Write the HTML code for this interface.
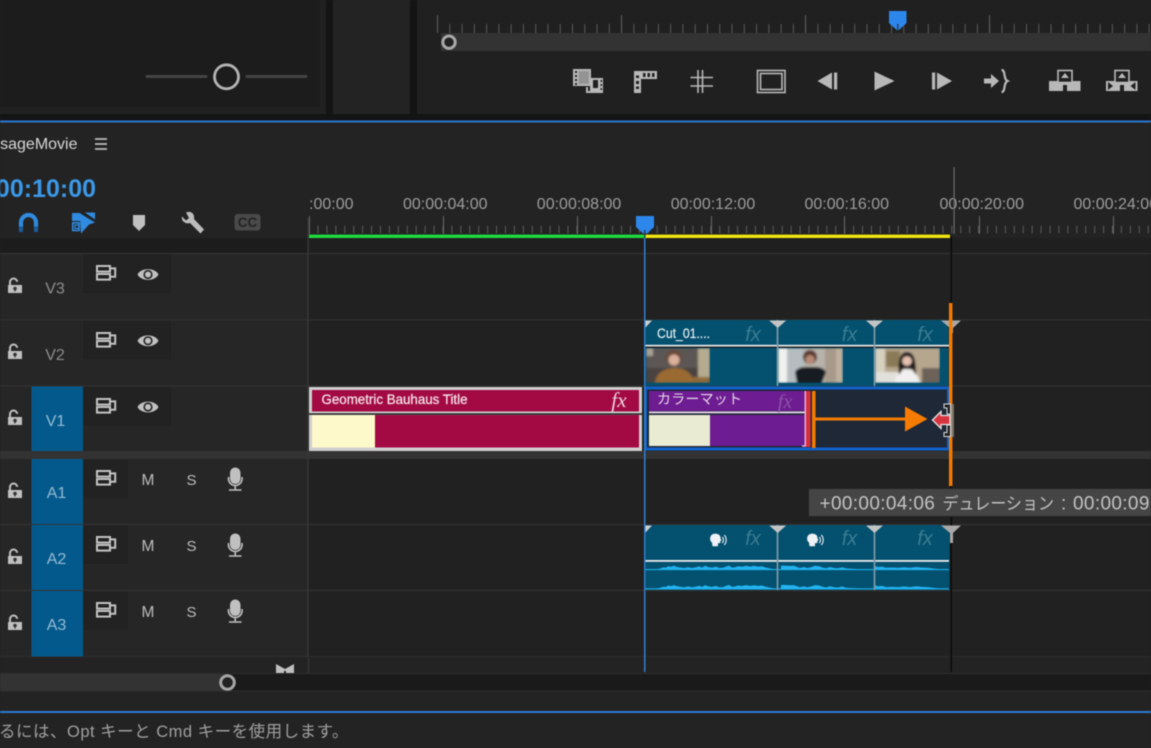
<!DOCTYPE html>
<html lang="ja">
<head>
<meta charset="utf-8">
<title>Timeline</title>
<style>
html,body{margin:0;padding:0;background:#222;width:1151px;height:748px;overflow:hidden}
svg.root{display:block;position:absolute;left:0;top:0;filter:blur(.4px)}
text{font-family:"Liberation Sans","Noto Sans CJK JP",sans-serif}
</style>
</head>
<body>
<svg class="root" width="1151" height="748" viewBox="0 0 1151 748" xmlns="http://www.w3.org/2000/svg">
<defs>
<filter id="b" x="-10%" y="-10%" width="120%" height="120%"><feGaussianBlur stdDeviation="1"/></filter>
<g id="lock">
  <path d="M10 7 V4.5 A3.6 3.6 0 0 1 17.2 3.8" fill="none" stroke="#c0c0c0" stroke-width="2"/>
  <path d="M8 7 H22 V15 H8 Z" fill="#c0c0c0"/>
  <circle cx="15" cy="10.5" r="1.8" fill="#333"/><rect x="14.4" y="10.5" width="1.2" height="3" fill="#333"/>
</g>
<g id="sync" fill="none" stroke="#c4c4c4" stroke-width="2">
  <rect x="97" y="1" width="13" height="5.6"/>
  <rect x="97" y="9" width="13" height="5.6"/>
  <path d="M110 3.4 H115.2 V11.8 H110"/>
</g>
<g id="eye">
  <path d="M137.5 0 C141 -7.2 155 -7.2 158.5 0 C155 7.2 141 7.2 137.5 0 Z" fill="#c0c0c0"/>
  <circle cx="148" cy="0" r="4.6" fill="#222"/>
  <circle cx="148" cy="0" r="3" fill="#c0c0c0"/>
</g>
<g id="mic">
  <rect x="230" y="0" width="10.5" height="16.5" rx="5.2" fill="#c0c0c0"/>
  <path d="M228.5 9.5 V12 A6.8 6.8 0 0 0 242 12 V9.5" fill="none" stroke="#c0c0c0" stroke-width="1.6"/>
  <path d="M235.2 18.5 V22 M229 22.5 H241.5" stroke="#c0c0c0" stroke-width="1.6"/>
</g>
<g id="ms">
  <text x="148" y="5.5" font-size="15.5" fill="#bdbdbd" text-anchor="middle">M</text>
  <text x="191.5" y="5.5" font-size="15" fill="#bdbdbd" text-anchor="middle">S</text>
</g>
<path id="wave" d="M645 570 V569.4 H655 L660 568.6 L663 567.4 L666 567.6 L668 566.2 L671 566.8 L674 565.8 L677 567 L680 567.4 L684 568 L688 567.2 L692 568 L696 567.3 L699 566.4 L702 567.6 L705 565.8 L708 567 L712 567.6 L716 566.6 L719 567.9 L723 567.8 L726 566.6 L729 565.6 L732 567.6 L735 567.2 L738 566.2 L742 566.7 L746 565.8 L750 566.6 L754 565.9 L758 566.6 L762 566.2 L766 567.6 L771 568.6 L776 569.4 V570 Z M781 570 V565.6 L786 565.7 L790 566 L794 565.8 L797 567 L800 568 L804 567 L807 568 L811 567.2 L815 565.8 L819 566.2 L823 567.6 L826 568.2 L830 567 L834 568 L838 568.2 L842 567.2 L846 568.4 L852 568.8 L860 569.2 L873 569.5 V570 Z M875 570 V566 L878 567 L882 566.6 L886 567.8 L892 567.5 L898 567.8 L904 567.2 L910 567.8 L916 567 L922 567.6 L928 567.8 L934 568.6 L940 569.3 L948 569.5 V570 Z" fill="#22b4f0"/>
<g id="spk">
  <path d="M0 -6.3 C4 -6.5 6.2 -4.5 6 -1.8 L7 0.5 L5.8 1 L5.8 3 L3.5 3.3 L3.5 6.2 L-2 6.2 L-2.5 2.5 C-5.5 0.5 -5 -6 0 -6.3 Z" fill="#eef2f4"/>
  <path d="M7.8 -3 A4.5 4.5 0 0 1 7.8 3 M9.8 -5 A7.5 7.5 0 0 1 9.8 5" fill="none" stroke="#eef2f4" stroke-width="1.1"/>
</g>
<path id="tri" d="M-8.5 0 H8.5 L0 7.5 Z" fill="#c4c4c4"/>
</defs>

<!-- base -->
<rect width="1151" height="748" fill="#232323"/>

<!-- top panels -->
<rect x="0" y="0" width="1151" height="121" fill="#141414"/>
<rect x="0" y="0" width="326" height="114" fill="#212121"/>
<rect x="0" y="0" width="320" height="107" fill="#1c1c1c"/>
<rect x="333" y="0" width="77" height="114" fill="#232323"/>
<rect x="417" y="0" width="734" height="114" fill="#202020"/>
<path d="M147 76.5 H206 M247 76.5 H306" stroke="#444" stroke-width="3" stroke-linecap="round"/>
<circle cx="226.5" cy="76.8" r="12" fill="none" stroke="#b4b4b4" stroke-width="2.8"/>

<!-- top ruler -->
<line x1="449.3" y1="28.5" x2="1151" y2="28.5" stroke="#5a5a5a" stroke-width="9" stroke-dasharray="1 11.27"/>
<path d="M437.5 15 V33 M621.5 15 V33 M805.5 15 V33 M989.5 15 V33" stroke="#606060" stroke-width="1"/>
<rect x="441" y="33" width="710" height="18" fill="#333"/>
<circle cx="449" cy="42.2" r="6.2" fill="#222" stroke="#a8a8a8" stroke-width="3"/>
<path d="M889 11 H906.5 V23 L897.8 31 L889 23 Z" fill="#2d86ea"/>
<path d="M897.8 24 V31" stroke="#202020" stroke-width="1"/>

<!-- transport icons -->
<g fill="#b8b8b8">
  <path d="M573 69 H591 V86 H573 Z"/>
  <path d="M575 71 H577 V73 H575 Z M575 75 H577 V77 H575 Z M575 79 H577 V81 H575 Z M575 83 H577 V85 H575 Z" fill="#202020"/>
  <rect x="578.5" y="71" width="10.5" height="13" fill="#949494"/>
  <path d="M590 78 H603 V93 H586 V87 H588 V91 H590 Z"/>
  <rect x="593" y="80" width="5" height="8" fill="#202020"/>
  <path d="M600.5 80 H602 V82 H600.5 Z M600.5 84 H602 V86 H600.5 Z M600.5 88 H602 V90 H600.5 Z M588 88 H589.5 V90 H588 Z" fill="#202020"/>
  <path d="M634 71 H657 V79 H641 V93 H634 Z"/>
  <path d="M643 73 H645.5 V77 H643 Z M647.5 73 H650 V77 H647.5 Z M652 73 H654.5 V77 H652 Z M636 75.5 H639 V78 H636 Z M636 81 H639 V84 H636 Z M636 86.5 H639 V89 H636 Z" fill="#202020"/>
  <path d="M817.5 81 L832 72.5 V89.5 Z"/><rect x="834" y="72.5" width="3.2" height="17"/>
  <path d="M874.5 71.5 L894.5 81 L874.5 90.5 Z"/>
  <rect x="932" y="72.5" width="3.2" height="17"/><path d="M937 72.5 L952 81 L937 89.5 Z"/>
  <path d="M984 78.5 H991 V74 L999 81 L991 88 V83.5 H984 Z"/>
  <path d="M1001.5 70 C1006 70 1003 79 1007.5 81 C1003 83 1006 92 1001.5 92" fill="none" stroke="#b8b8b8" stroke-width="2.2"/>
  <!-- lift -->
  <path d="M1049 91 V81 H1058 V83 H1072 V81 H1080.5 V91 H1067 V85 H1063 V91 Z"/>
  <rect x="1058" y="70.5" width="14" height="12" fill="#202020" stroke="#b8b8b8" stroke-width="1.6"/>
  <path d="M1065 73 L1069 78 H1061 Z"/>
  <!-- extract -->
  <path d="M1106 91 V81 H1115 V83 H1129 V81 H1137.5 V91 H1124 V85 H1120 V91 Z"/>
  <rect x="1115" y="70.5" width="14" height="12" fill="#202020" stroke="#b8b8b8" stroke-width="1.6"/>
  <path d="M1122 73 L1126 78 H1118 Z"/>
  <path d="M1108 82 L1113 86 L1108 90 Z M1135.5 82 L1130.5 86 L1135.5 90 Z" fill="#202020"/>
</g>
<g fill="none" stroke="#b8b8b8" stroke-width="1.6">
  <path d="M698 70 V93 M702.5 70 V93 M690.5 77.5 H713 M690.5 86 H713"/>
  <rect x="757.5" y="70.5" width="27.5" height="22"/>
  <rect x="760.5" y="73.5" width="21.5" height="16"/>
</g>

<!-- blue separator -->
<rect x="0" y="120.5" width="1151" height="2" fill="#2b7ad0"/>

<!-- timeline header -->
<text x="77.5" y="149" font-size="16" fill="#d8d8d8" text-anchor="end">UsageMovie</text>
<path d="M95 139 H107 M95 144 H107 M95 149 H107" stroke="#bcbcbc" stroke-width="1.7"/>
<text x="96" y="197" font-size="25" font-weight="bold" fill="#3b98e6" text-anchor="end">00:10:00</text>

<!-- toolbar icons -->
<path d="M21 227 V222.5 A7.5 7.5 0 0 1 36 222.5 V227" fill="none" stroke="#2f8be0" stroke-width="4.2"/>
<path d="M19 226.5 H23 V232 H19 Z M34 226.5 H38 V232 H34 Z" fill="#1c5c9d"/>
<path d="M72 213 H80 V221 H72 Z" fill="#2f8be0"/>
<path d="M72.8 222.8 H79 V230.5 H72.8 Z" fill="none" stroke="#2f8be0" stroke-width="1.6"/>
<path d="M75 225 H79 V228.5 H75 Z" fill="none" stroke="#2f8be0" stroke-width="1.2"/>
<path d="M79.5 213 L95 222.5 L89 224.5 L81 233.5 Z" fill="#2f8be0"/>
<path d="M85 212.5 H95 V219.5 Z" fill="#2f8be0"/>
<path d="M133 215 H145 V225 L139 231 L133 225 Z" fill="#c0c0c0"/>
<path d="M182 216.5 L186 220.5 L189 218 L186 212.5 C191 210.5 195 214 194 219 L204 229.5 L200.5 233.5 L190 223 C185.5 224.5 181 221 182 216.5 Z" fill="#bcbcbc"/>
<rect x="234.5" y="214" width="26" height="16.5" rx="3" fill="#4a4a4a"/>
<text x="247.5" y="227" font-size="13.5" font-weight="bold" fill="#232323" text-anchor="middle">CC</text>

<!-- ruler labels -->
<g font-size="16" fill="#9d9d9d">
  <text x="309" y="209">:00:00</text>
  <text x="403" y="209">00:00:04:00</text>
  <text x="536.8" y="209">00:00:08:00</text>
  <text x="670.7" y="209">00:00:12:00</text>
  <text x="804.5" y="209">00:00:16:00</text>
  <text x="939.5" y="209">00:00:20:00</text>
  <text x="1073.5" y="209">00:00:24:00</text>
</g>
<line x1="317.5" y1="229.5" x2="1151" y2="229.5" stroke="#5c5c5c" stroke-width="7.5" stroke-dasharray="1 7.927"/>
<path d="M309.5 216 V234 M443.5 216 V234 M577.5 216 V234 M711.5 216 V234 M844.5 216 V234 M979.5 216 V234 M1113.5 216 V234" stroke="#6a6a6a" stroke-width="1"/>

<!-- dark band and tracks area -->
<rect x="0" y="238" width="308" height="15" fill="#1c1c1c"/>
<rect x="309" y="238" width="842" height="15" fill="#1f1f1f"/>
<rect x="309" y="254" width="842" height="403" fill="#212121"/>
<rect x="0" y="254" width="308" height="403" fill="#262626"/>
<rect x="0" y="451" width="1151" height="8" fill="#333"/>
<g stroke="#333" stroke-width="1.2">
  <path d="M0 253.5 H1151 M0 319.8 H1151 M0 386 H1151 M0 524.5 H1151 M0 590.5 H1151 M0 656.8 H1151"/>
  <path d="M308 218 V672" stroke="#3a3a3a"/>
</g>

<!-- track targets -->
<g fill="#04598c">
  <rect x="31.5" y="386.5" width="51.5" height="64.5"/>
  <rect x="31.5" y="459" width="51.5" height="65"/>
  <rect x="31.5" y="525" width="51.5" height="65"/>
  <rect x="31.5" y="591" width="51.5" height="65.5"/>
</g>
<g fill="#222">
  <rect x="83" y="254" width="88" height="39"/>
  <rect x="83" y="320.5" width="88" height="39"/>
  <rect x="83" y="386.5" width="88" height="39"/>
  <rect x="83" y="459" width="45" height="39"/>
  <rect x="83" y="525" width="45" height="39"/>
  <rect x="83" y="591" width="45" height="39"/>
</g>

<!-- track icons -->
<use href="#lock" y="278"/><use href="#lock" y="344"/><use href="#lock" y="410"/>
<use href="#lock" y="483"/><use href="#lock" y="549"/><use href="#lock" y="615"/>
<use href="#sync" y="265"/><use href="#sync" y="332"/><use href="#sync" y="398"/>
<use href="#sync" y="470"/><use href="#sync" y="536"/><use href="#sync" y="602"/>
<use href="#eye" y="274.5"/><use href="#eye" y="340.8"/><use href="#eye" y="407"/>
<use href="#ms" y="479.5"/><use href="#ms" y="545.5"/><use href="#ms" y="611.5"/>
<use href="#mic" y="467.5"/><use href="#mic" y="533.5"/><use href="#mic" y="599.5"/>

<g font-size="16" text-anchor="middle">
  <text x="55" y="293.5" fill="#8d8d8d">V3</text>
  <text x="55" y="360" fill="#8d8d8d">V2</text>
  <text x="55.5" y="426" fill="#94bcd4">V1</text>
  <text x="56.5" y="498" fill="#94bcd4">A1</text>
  <text x="56.5" y="564" fill="#94bcd4">A2</text>
  <text x="56.5" y="630" fill="#94bcd4">A3</text>
</g>

<!-- title clip -->
<rect x="309" y="387" width="333" height="64" fill="#cfcfcf"/>
<rect x="312" y="390" width="327" height="21.5" fill="#a30a43"/>
<rect x="309" y="413.3" width="333" height="1.5" fill="#1b1b1b"/>
<rect x="312" y="415" width="327" height="32.5" fill="#a30a43"/>
<rect x="312" y="415" width="63" height="32.5" fill="#fdf9cb"/>
<text x="321.5" y="404" font-size="14" fill="#f4e4ea" stroke="#f4e4ea" stroke-width=".25" textLength="146" lengthAdjust="spacingAndGlyphs">Geometric Bauhaus Title</text>
<text x="619" y="407" font-size="21" font-style="italic" fill="#ecd5de" text-anchor="middle" style="font-family:'Liberation Serif',serif">fx</text>

<!-- V2 clips -->
<path d="M645 320 H942 Q948 320 948.5 326 V386 H645 Z" fill="#03506f"/>
<rect x="645" y="344.8" width="304" height="1.8" fill="#e6e6e6"/>
<rect x="645" y="346.6" width="304" height="1.3" fill="#1a1a1a"/>
<text x="657" y="338" font-size="14" fill="#e6ecef" stroke="#e6ecef" stroke-width=".2" textLength="53" lengthAdjust="spacingAndGlyphs">Cut_01....</text>
<g font-size="20" font-style="italic" fill="#3c7d92" text-anchor="middle" style="font-family:'Liberation Serif',serif">
  <text x="753" y="341">fx</text><text x="849.5" y="341">fx</text><text x="925" y="341">fx</text>
</g>
<!-- thumb 1 -->
<svg x="646" y="348" width="64" height="35" viewBox="0 0 64 35">
  <g filter="url(#b)">
    <rect width="64" height="35" fill="#5c5655"/>
    <rect x="0" y="20" width="64" height="15" fill="#4a4240"/>
    <rect x="52" y="0" width="12" height="35" fill="#b5ab90"/>
    <path d="M9 35 C10 24 20 20 29 20 C38 20 46 24 48 35 Z" fill="#9a6a33"/>
    <rect x="46" y="29" width="18" height="6" fill="#8f6a3a"/>
    <circle cx="28" cy="10" r="8" fill="#6a4a38"/>
    <circle cx="28" cy="12" r="5.5" fill="#d8b09c"/>
    <rect x="0" y="0" width="7" height="8" fill="#a8a093"/>
  </g>
</svg>
<!-- thumb 2 -->
<svg x="778" y="348" width="65" height="35" viewBox="0 0 65 35">
  <g filter="url(#b)">
    <rect width="65" height="35" fill="#b7b3ab"/>
    <rect x="0" y="0" width="9" height="35" fill="#f1f1ee"/>
    <rect x="9" y="0" width="17" height="35" fill="#b5bdc0"/>
    <rect x="47" y="0" width="18" height="35" fill="#a89a8a"/>
    <rect x="58" y="0" width="7" height="35" fill="#bdb09c"/>
    <path d="M19 35 L17 24 C20 18 28 19 32 19 C37 19 45 18 48 24 L44 35 Z" fill="#191c22"/>
    <circle cx="32" cy="9" r="7" fill="#5a3a30"/>
    <circle cx="32" cy="11.5" r="4.5" fill="#b88a76"/>
  </g>
</svg>
<!-- thumb 3 -->
<svg x="875" y="348" width="65" height="35" viewBox="0 0 65 35">
  <g filter="url(#b)">
    <rect width="65" height="35" fill="#b6a68e"/>
    <rect x="0" y="0" width="10" height="24" fill="#d6d0bf"/>
    <rect x="11" y="3" width="14" height="16" fill="#8a7a58"/>
    <rect x="0" y="24" width="24" height="11" fill="#e2e0da"/>
    <rect x="47" y="20" width="18" height="15" fill="#6c6258"/>
    <path d="M20 35 C20 25 26 21 31 21 C38 21 43 25 45 35 Z" fill="#f2f0ee"/>
    <path d="M24 27 C23 14 24 4 32 4 C40 4 41 14 41 27 L37 21 H28 Z" fill="#1b1518"/>
    <circle cx="32" cy="13" r="4.8" fill="#e4c0ae"/>
  </g>
</svg>
<path d="M777.5 320 V386 M874.5 320 V386" stroke="#7f9aa6" stroke-width="1.7"/>
<use href="#tri" x="777.7" y="320.5"/><use href="#tri" x="874.5" y="320.5"/>
<path d="M645 320.5 H652 L645.5 327.5 Z" fill="#cfcfcf"/>

<!-- V1 selected clip -->
<rect x="648" y="390" width="300" height="58" fill="#1f2837"/>
<rect x="649" y="391" width="156" height="20" fill="#6e1c91"/>
<rect x="649" y="411.5" width="156" height="1.8" fill="#e6d8ea"/>
<rect x="649" y="415" width="156" height="31" fill="#6e1c91"/>
<rect x="649" y="415" width="61" height="31" fill="#e9ecd2"/>
<rect x="804.5" y="391" width="1.6" height="55" fill="#e8b0d8"/>
<path d="M802 446 H806" stroke="#e8b0d8" stroke-width="1.5"/>
<rect x="806" y="391" width="4.5" height="56" fill="#d5303c"/>
<text x="657" y="404" font-size="14" fill="#e5d9ea" letter-spacing=".2">カラーマット</text>
<text x="785" y="408" font-size="20" font-style="italic" fill="#8a55a6" text-anchor="middle" style="font-family:'Liberation Serif',serif">fx</text>
<rect x="645.5" y="388" width="303" height="61" fill="none" stroke="#0f62cc" stroke-width="3"/>

<!-- arrow -->
<rect x="812" y="391" width="3.5" height="57" fill="#f57c00"/>
<rect x="815" y="417.5" width="92" height="3" fill="#f57c00"/>
<path d="M905 406.5 L927.5 419 L905 431.5 Z" fill="#f57c00"/>

<!-- A2 clips -->
<path d="M645 525 H942 Q949 525 949.5 532 V590 H645 Z" fill="#03506f"/>
<rect x="645" y="560" width="304" height="1.8" fill="#ececec"/>
<rect x="645" y="569" width="304" height="1.1" fill="#1eaee8"/>
<rect x="645" y="588.3" width="304" height="1.1" fill="#1eaee8"/>
<use href="#wave"/><use href="#wave" y="19.3"/>
<use href="#spk" x="714.5" y="540"/><use href="#spk" x="811.5" y="540"/>
<g font-size="20" font-style="italic" fill="#3c7d92" text-anchor="middle" style="font-family:'Liberation Serif',serif">
  <text x="753" y="545">fx</text><text x="849.5" y="545">fx</text><text x="925" y="545">fx</text>
</g>
<path d="M777.5 525 V590 M874.5 525 V590" stroke="#7f9aa6" stroke-width="1.7"/>
<use href="#tri" x="777.7" y="525.5"/><use href="#tri" x="874.5" y="525.5"/>
<path d="M645 525.5 H652 L645.5 532.5 Z" fill="#cfcfcf"/>

<!-- bottom area -->
<rect x="0" y="657" width="1151" height="16" fill="#232323"/>
<rect x="308" y="658" width="1" height="15" fill="#3a3a3a"/>
<path d="M276 664 L285 669 L294 664 V673 H286 V671 L284 671 V673 H276 Z" fill="#c0c0c0"/>
<rect x="0" y="673" width="1151" height="18" fill="#1a1a1a"/>
<rect x="0" y="673" width="1151" height="1" fill="#2d2d2d"/>
<rect x="0" y="674" width="227" height="17" fill="#333"/>
<rect x="0" y="691" width="1151" height="20" fill="#232323"/>
<rect x="0" y="690.5" width="1151" height="1" fill="#2f2f2f"/>
<circle cx="227.5" cy="682.5" r="6.8" fill="#222" stroke="#a6a6a6" stroke-width="3"/>
<rect x="0" y="711" width="1151" height="2" fill="#2b7ad0"/>
<text x="-1" y="737" font-size="16.5" letter-spacing=".5" fill="#a0a0a0">るには、Opt キーと Cmd キーを使用します。</text>

<!-- vertical markers -->
<rect x="644" y="234" width="1.5" height="438" fill="#2f7fd0"/>
<rect x="950.5" y="237" width="1.5" height="435" fill="#0a0a0a"/>
<rect x="953.5" y="167" width="1.2" height="67" fill="#6c6c6c"/>

<!-- triangles over end -->
<path d="M941 320.5 H961 L953 328 V333 H950 V328 Z" fill="#a9a9a9"/>
<path d="M941 525.5 H961 L953 533 V543 H950 V533 Z" fill="#a9a9a9"/>

<!-- work area bars -->
<rect x="309" y="234.6" width="336" height="3.4" fill="#1fdc3f"/>
<rect x="645.5" y="234.6" width="304.5" height="3.4" fill="#f2e610"/>

<!-- playhead -->
<path d="M636 216 H654 V227 L647 233.5 H643 L636 227 Z" fill="#2d86ea"/>
<rect x="644.3" y="230" width="1" height="8" fill="#1c1c1c"/>

<!-- orange edit line -->
<rect x="949" y="303" width="3.4" height="183" fill="#f57c00"/>

<!-- trim cursor -->
<g>
  <rect x="949" y="404" width="5" height="33" fill="#8c8c8c" opacity=".75"/>
  <path d="M944 404 H950.5 V414 H947 V408 H944 Z M944 436.5 H950.5 V425 H947 V432.5 H944 Z" fill="#222" stroke="#dcdcdc" stroke-width="1"/>
  <path d="M932.5 420 L941 411.5 V415.5 H950 V424.5 H941 V428.5 Z" fill="#d8343f" stroke="#e6e6e6" stroke-width="1.3"/>
</g>

<!-- tooltip -->
<rect x="808.5" y="488.5" width="345" height="28" fill="#454545" stroke="#222" stroke-width="1"/>
<text x="819.5" y="509.5" font-size="19" letter-spacing=".35" fill="#c3c3c3">+00:00:04:06</text>
<text x="942.5" y="509.5" font-size="17" fill="#c3c3c3" textLength="111.5" lengthAdjust="spacingAndGlyphs">デュレーション</text>
<text x="1061" y="509.5" font-size="19" fill="#c3c3c3">:</text>
<text x="1073" y="509.5" font-size="19" letter-spacing=".35" fill="#c3c3c3">00:00:09</text>
</svg>
</body>
</html>
